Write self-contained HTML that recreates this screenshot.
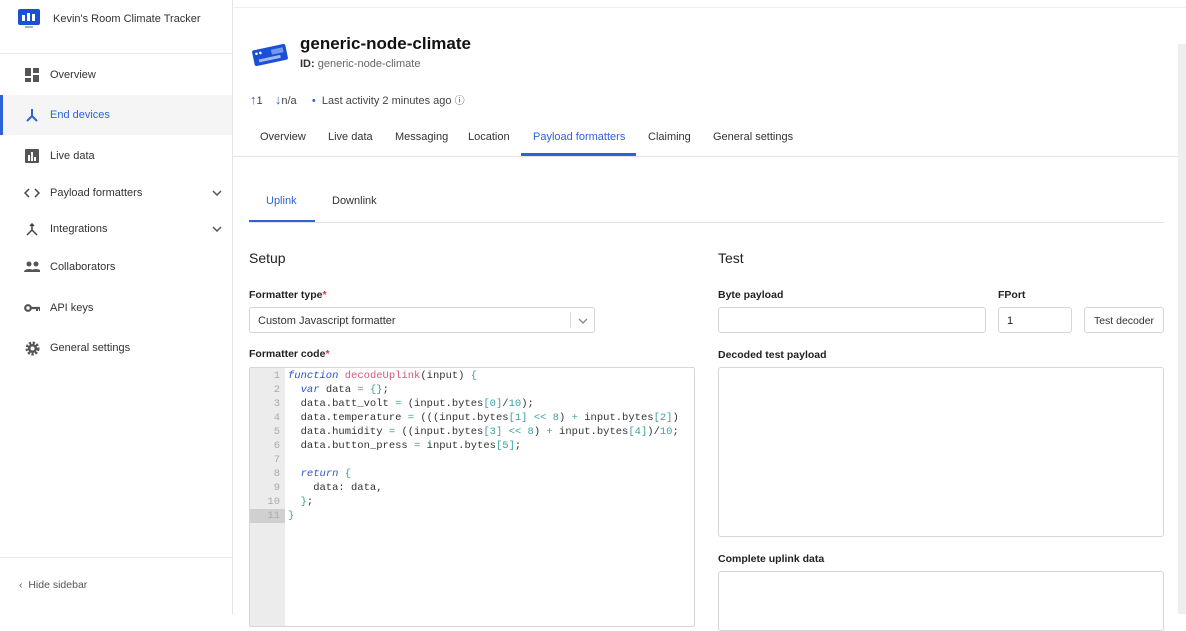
<!DOCTYPE html><html><head><style>
*{box-sizing:border-box;margin:0;padding:0}
body{width:1186px;height:614px;overflow:hidden;background:#fff;font-family:"Liberation Sans",sans-serif;color:#222;position:relative;font-size:11px}
.a{position:absolute}
.side{left:0;top:0;width:233px;height:614px;border-right:1px solid #e4e4e4;background:#fff}
.nav{position:absolute;left:0;width:232px;height:40px;display:flex;align-items:center;font-size:11px;color:#333}
.nav .ic{width:16px;height:16px;margin-left:24px;margin-right:10px;display:flex;align-items:center;justify-content:center}
.lbl{font-size:10.5px;font-weight:bold;color:#222}
.inp{position:absolute;border:1px solid #d6d6d6;border-radius:3px;background:#fff}
.code{font-family:"Liberation Mono",monospace;font-size:10.5px;line-height:14px;white-space:pre;color:#333}
.kw{color:#2b55c9;font-style:italic}.fn{color:#d9577a}.n{color:#3aa3a0}
.gut{font-family:"Liberation Mono",monospace;font-size:10.5px;line-height:14px;color:#aaa;text-align:right;white-space:pre}
.tab{position:absolute;top:131px;font-size:11px;color:#333}
</style></head><body>
<div class="a side">
 <div class="a" style="left:18px;top:9px;width:22px;height:16px;background:#1b4fd6;border-radius:2px"></div>
 <div class="a" style="left:22px;top:15px;width:3px;height:6px;background:#fff"></div><div class="a" style="left:27px;top:13px;width:3px;height:8px;background:#fff"></div><div class="a" style="left:32px;top:14px;width:3px;height:7px;background:#fff"></div>
 <div class="a" style="left:25px;top:26px;width:8px;height:2px;background:#9bb"></div>
 <div class="a" style="left:53px;top:13px;font-size:11px;color:#333">Kevin's Room Climate Tracker</div>
 <div class="a" style="left:0;top:53px;width:232px;border-top:1px solid #e8e8e8"></div>
 <div class="nav" style="top:55px"><div class="ic"><svg width="14" height="14"><rect x="0" y="0" width="6" height="8" fill="#555"/><rect x="8" y="0" width="6" height="5" fill="#555"/><rect x="0" y="10" width="6" height="4" fill="#555"/><rect x="8" y="7" width="6" height="7" fill="#555"/></svg></div>Overview</div>
 <div class="nav" style="top:95px;background:#f5f5f5;color:#2e62d9;border-left:3px solid #2e62d9"><div class="ic" style="margin-left:21px"><svg width="16" height="16" fill="none" stroke="#2e62d9" stroke-width="2"><path d="M8 2v7M8 9l-5 5M8 9l5 5"/></svg></div>End devices</div>
 <div class="nav" style="top:136px"><div class="ic"><svg width="14" height="14"><rect width="14" height="14" rx="1" fill="#555"/><rect x="3" y="6" width="2" height="6" fill="#fff"/><rect x="6" y="3" width="2" height="9" fill="#fff"/><rect x="9" y="8" width="2" height="4" fill="#fff"/></svg></div>Live data</div>
 <div class="nav" style="top:173px"><div class="ic"><svg width="16" height="12" fill="none" stroke="#444" stroke-width="1.5"><path d="M5 2L1 6l4 4M11 2l4 4-4 4"/></svg></div>Payload formatters<svg style="position:absolute;right:10px" width="10" height="6" fill="none" stroke="#555" stroke-width="1.5"><path d="M1 1l4 4 4-4"/></svg></div>
 <div class="nav" style="top:209px"><div class="ic"><svg width="14" height="14" fill="none" stroke="#444" stroke-width="1.5"><path d="M7 2v6L2 13M7 8l5 5M5 4l2-2 2 2"/></svg></div>Integrations<svg style="position:absolute;right:10px" width="10" height="6" fill="none" stroke="#555" stroke-width="1.5"><path d="M1 1l4 4 4-4"/></svg></div>
 <div class="nav" style="top:247px"><div class="ic"><svg width="17" height="12" fill="#555"><circle cx="5" cy="3" r="2.5"/><circle cx="12" cy="3" r="2.5"/><path d="M0 11c0-4 10-4 10 0zM7 11c0-4 10-4 10 0z"/></svg></div>Collaborators</div>
 <div class="nav" style="top:288px"><div class="ic"><svg width="17" height="10" fill="none" stroke="#555" stroke-width="2.2"><circle cx="4" cy="5" r="2.8"/><path d="M7 5h9M13 5v3M16 5v3"/></svg></div>API keys</div>
 <div class="nav" style="top:328px"><div class="ic"><svg width="15" height="15"><circle cx="7.5" cy="7.5" r="5.5" fill="none" stroke="#555" stroke-width="3" stroke-dasharray="2.2 1.5"/><circle cx="7.5" cy="7.5" r="4.5" fill="#555"/><circle cx="7.5" cy="7.5" r="2" fill="#fff"/></svg></div>General settings</div>
 <div class="a" style="left:0;top:557px;width:232px;border-top:1px solid #e8e8e8"></div>
 <div class="a" style="left:19px;top:579px;font-size:10.5px;color:#555">&lsaquo;&nbsp; Hide sidebar</div>
</div>
<div class="a" style="left:233px;top:7px;width:953px;border-top:1px solid #eee"></div>
<div class="a" style="left:1178px;top:44px;width:8px;height:570px;background:#eee"></div>
<svg class="a" style="left:250px;top:41px" width="40" height="28"><g transform="rotate(-12 20 14)"><rect x="3" y="6" width="34" height="16" rx="2" fill="#1b4fd6"/><rect x="22" y="9" width="12" height="5" fill="#6f9af0"/><rect x="8" y="16" width="22" height="3" fill="#fff" opacity=".6"/><circle cx="7" cy="10" r="1.3" fill="#fff"/><circle cx="11" cy="10" r="1.3" fill="#fff"/></g></svg>
<div class="a" style="left:300px;top:34px;font-size:17px;font-weight:bold;color:#111">generic-node-climate</div>
<div class="a" style="left:300px;top:58px;font-size:11px;color:#666"><b style="color:#333">ID:</b> generic-node-climate</div>
<div class="a" style="left:250px;top:92px;font-size:11px;color:#444"><span style="color:#2e62d9;font-size:13px">&#8593;</span>1 &nbsp;&nbsp;&nbsp;<span style="color:#2e62d9;font-size:13px">&#8595;</span>n/a &nbsp;&nbsp;&nbsp;&nbsp;<span style="color:#2e62d9">&#8226;</span>&nbsp; Last activity 2 minutes ago <span style="font-size:10px">&#9432;</span></div>
<div class="tab" style="left:260px">Overview</div><div class="tab" style="left:328px">Live data</div><div class="tab" style="left:395px">Messaging</div><div class="tab" style="left:468px">Location</div><div class="tab" style="left:533px;color:#2e62d9">Payload formatters</div><div class="tab" style="left:648px">Claiming</div><div class="tab" style="left:713px">General settings</div>
<div class="a" style="left:521px;top:153px;width:115px;height:3px;background:#2e62d9"></div>
<div class="a" style="left:233px;top:156px;width:945px;border-top:1px solid #e4e4e4"></div>
<div class="a" style="left:266px;top:195px;font-size:11px;color:#2e62d9">Uplink</div>
<div class="a" style="left:332px;top:195px;font-size:11px;color:#333">Downlink</div>
<div class="a" style="left:249px;top:220px;width:66px;height:2px;background:#2e62d9"></div>
<div class="a" style="left:249px;top:222px;width:915px;border-top:1px solid #e4e4e4"></div>
<div class="a" style="left:249px;top:250px;font-size:14px;color:#222">Setup</div>
<div class="a" style="left:718px;top:250px;font-size:14px;color:#222">Test</div>
<div class="a lbl" style="left:249px;top:289px">Formatter type<span style="color:#d33">*</span></div>
<div class="inp" style="left:249px;top:307px;width:346px;height:26px;padding:7px 8px;font-size:11px;color:#333">Custom Javascript formatter<span class="a" style="left:320px;top:4px;height:16px;border-left:1px solid #ddd"></span><svg class="a" style="left:328px;top:10px" width="10" height="6" fill="none" stroke="#888" stroke-width="1.3"><path d="M1 1l4 4 4-4"/></svg></div>
<div class="a lbl" style="left:249px;top:348px">Formatter code<span style="color:#d33">*</span></div>
<div class="inp" style="left:249px;top:367px;width:446px;height:260px;border-radius:2px;overflow:hidden">
 <div class="a" style="left:0;top:0;width:35px;height:260px;background:#ececec"></div>
 <div class="a" style="left:0;top:141px;width:35px;height:14px;background:#d0d0d0"></div>
 <div class="a gut" style="left:0;top:1px;width:30px">1
2
3
4
5
6
7
8
9
10
11</div>
 <div class="a code" style="left:38px;top:1px"><span class="kw">function</span> <span class="fn">decodeUplink</span>(input) <span class="n">{</span>
  <span class="kw">var</span> data <span class="n">=</span> <span class="n">{}</span>;
  data.batt_volt <span class="n">=</span> (input.bytes<span class="n">[0]</span>/<span class="n">10</span>);
  data.temperature <span class="n">=</span> (((input.bytes<span class="n">[1]</span> <span class="n">&lt;&lt;</span> <span class="n">8</span>) <span class="n">+</span> input.bytes<span class="n">[2]</span>)
  data.humidity <span class="n">=</span> ((input.bytes<span class="n">[3]</span> <span class="n">&lt;&lt;</span> <span class="n">8</span>) <span class="n">+</span> input.bytes<span class="n">[4]</span>)/<span class="n">10</span>;
  data.button_press <span class="n">=</span> input.bytes<span class="n">[5]</span>;

  <span class="kw">return</span> <span class="n">{</span>
    data: data,
  <span class="n">}</span>;
<span class="n">}</span></div>
</div>
<div class="a lbl" style="left:718px;top:289px">Byte payload</div>
<div class="a lbl" style="left:998px;top:289px">FPort</div>
<div class="inp" style="left:718px;top:307px;width:268px;height:26px"></div>
<div class="inp" style="left:998px;top:307px;width:74px;height:26px;padding:7px 8px;font-size:11px">1</div>
<div class="inp" style="left:1084px;top:307px;width:80px;height:26px;padding:7px 0;text-align:center;font-size:10.5px;color:#333">Test decoder</div>
<div class="a lbl" style="left:718px;top:349px">Decoded test payload</div>
<div class="inp" style="left:718px;top:367px;width:446px;height:170px"></div>
<div class="a lbl" style="left:718px;top:553px">Complete uplink data</div>
<div class="inp" style="left:718px;top:571px;width:446px;height:60px"></div>
</body></html>
